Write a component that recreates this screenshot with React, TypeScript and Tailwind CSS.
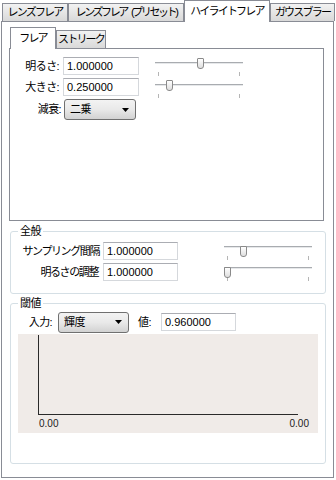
import React from "react";

const jp = "font-['Liberation_Sans','Noto_Sans_CJK_JP',sans-serif]";

function Slider({ pos }: { pos: number }) {
  return (
    <div className="relative w-[88px] mt-[1px]">
      <div className="mt-[4px] h-[2px] border-t border-[#a9acb0] bg-[#e6e8ea]" />
      <div className="mt-[8px] flex justify-between px-[3px]">
        <span className="block w-px h-[4px] bg-[#b5b5b5]" />
        <span className="block w-px h-[4px] bg-[#b5b5b5]" />
      </div>
      <div
        className="absolute top-0 w-[7px] h-[11px] border border-[#8a8a8a] rounded-t-[1px] rounded-b-[3px] bg-linear-to-b from-[#ffffff] to-[#dedede]"
        style={{ left: pos }}
      />
    </div>
  );
}

function TextBox({ value, w }: { value: string; w: number }) {
  return (
    <div
      className="h-[18px] border border-[#d5d8dc] border-t-[#abadb3] bg-white pl-[3px] text-[11px] leading-[16px] text-black"
      style={{ width: w }}
    >
      {value}
    </div>
  );
}

function Combo({ label, w }: { label: string; w: number }) {
  return (
    <div
      className="h-[21px] border border-[#707070] rounded-[3px] bg-linear-to-b from-[#f3f3f3] via-[#e9e9e9] to-[#d2d2d2] flex items-center justify-between pl-[5px] pr-[6px]"
      style={{ width: w }}
    >
      <span className="text-[11px] tracking-[-0.5px]">{label}</span>
      <svg width="7" height="4" viewBox="0 0 7 4">
        <polygon points="0,0 7,0 3.5,4" fill="#000" />
      </svg>
    </div>
  );
}

function Tab({ children, w, active, tight }: { children: React.ReactNode; w: number; active?: boolean; tight?: boolean }) {
  const track = tight ? "tracking-[-2.4px]" : "tracking-[-1.8px]";
  return (
    <div
      className={
        active
          ? `relative z-10 -mb-px h-[22px] border border-b-0 border-[#898c95] bg-white flex items-start justify-center pt-[2px] text-[11px] whitespace-nowrap ${track}`
          : `h-[18px] border border-b-0 border-[#898c95] bg-linear-to-b from-[#f2f2f2] to-[#d9d9d9] flex items-center justify-center text-[11px] whitespace-nowrap ${track}`
      }
      style={{ width: w }}
    >
      {children}
    </div>
  );
}

export default function App() {
  return (
    <div className={`w-[336px] h-[480px] bg-white text-black ${jp}`}>
      {/* outer tabs */}
      <div className="flex items-end h-[21px] pl-[2px]">
        <Tab w={66}>レンズフレア</Tab>
        <Tab w={116} tight>
          レンズフレア<span className="ml-[4px]">(プリセット)</span>
        </Tab>
        <Tab w={86} active>ハイライトフレア</Tab>
        <Tab w={65}>ガウスブラー</Tab>
      </div>

      <div className="ml-[1px] w-[333px] h-[457px] border border-[#898c95] bg-white pl-[7px] pt-[5px]">
        {/* inner tabs */}
        <div className="flex items-end h-[21px] pl-[1px]">
          <Tab w={46} active>フレア</Tab>
          <Tab w={50}>ストリーク</Tab>
        </div>

        <div className="w-[315px] h-[173px] border border-[#898c95] pt-[8px]">
          <div className="flex">
            <div className="flex flex-col gap-[3px]">
              <div className="flex items-center">
                <span className="w-[53px] pr-[4px] text-right text-[11px] tracking-[-0.6px]">明るさ:</span>
                <TextBox value="1.000000" w={76} />
              </div>
              <div className="flex items-center">
                <span className="w-[53px] pr-[4px] text-right text-[11px] tracking-[-0.6px]">大きさ:</span>
                <TextBox value="0.250000" w={76} />
              </div>
              <div className="flex items-center">
                <span className="w-[54px] pr-[3px] text-right text-[11px] tracking-[-0.6px]">減衰:</span>
                <Combo label="二乗" w={72} />
              </div>
            </div>
            <div className="ml-[16px] flex flex-col gap-[3px]">
              <Slider pos={42} />
              <Slider pos={11} />
            </div>
          </div>
        </div>

        {/* 全般 */}
        <fieldset className="mt-[3px] ml-px w-[316px] h-[70px] border border-[#d5dfe5] rounded-[3px] px-0 pt-[4px]">
          <legend className="ml-[7px] px-[2px] text-[11px] leading-[14px] tracking-[-0.5px]">全般</legend>
          <div className="flex flex-col gap-[3px]">
            <div className="flex items-start">
              <span className="w-[92px] pr-[4px] text-right text-[11px] leading-[18px] tracking-[-1.4px] whitespace-nowrap">サンプリング間隔</span>
              <TextBox value="1.000000" w={75} />
              <div className="ml-[46px]">
                <Slider pos={16} />
              </div>
            </div>
            <div className="flex items-start">
              <span className="w-[92px] pr-[5px] text-right text-[11px] leading-[18px] tracking-[-1.4px] whitespace-nowrap">明るさの調整</span>
              <TextBox value="1.000000" w={75} />
              <div className="ml-[46px]">
                <Slider pos={0} />
              </div>
            </div>
          </div>
        </fieldset>

        {/* 閾値 */}
        <fieldset className="mt-[2px] ml-px w-[316px] h-[168px] border border-[#d5dfe5] rounded-[3px] px-0 pt-[1px]">
          <legend className="ml-[7px] px-[2px] text-[11px] leading-[14px] tracking-[-0.5px]">閾値</legend>
          <div className="flex items-center h-[22px]">
            <span className="w-[47px] pr-[6px] text-right text-[11px] tracking-[-0.6px]">入力:</span>
            <Combo label="輝度" w={71} />
            <span className="ml-[9px] w-[23px] text-[11px] tracking-[-0.6px]">値:</span>
            <TextBox value="0.960000" w={75} />
          </div>
          <div className="mt-px ml-[7px] w-[300px] h-[99px] bg-[#f0ebe8] pt-px">
            <div className="ml-[20px] w-[260px] h-[80px] border-l border-b border-[#2a2a2a]" />
            <div className="ml-[21px] w-[270px] flex justify-between text-[10px] leading-[12px] text-[#222] mt-[3px]">
              <span>0.00</span>
              <span>0.00</span>
            </div>
          </div>
        </fieldset>
      </div>
    </div>
  );
}
